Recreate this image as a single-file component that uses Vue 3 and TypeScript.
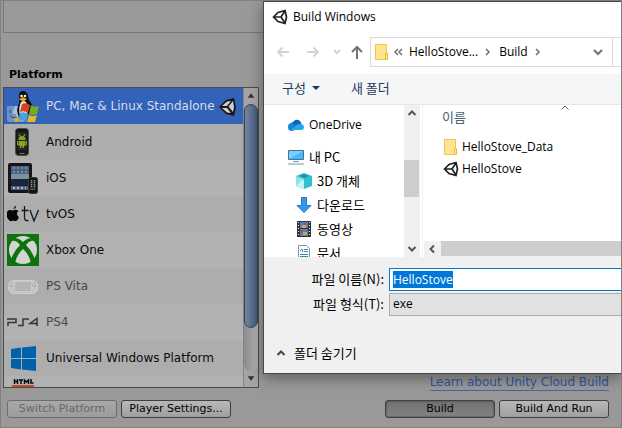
<script setup lang="ts">
import { onMounted, ref } from 'vue'

interface Platform {
  id: string
  name: string
  disabled?: boolean
}

const platforms: Platform[] = [
  { id: 'pc', name: 'PC, Mac & Linux Standalone' },
  { id: 'android', name: 'Android' },
  { id: 'ios', name: 'iOS' },
  { id: 'tvos', name: 'tvOS' },
  { id: 'xbox', name: 'Xbox One' },
  { id: 'vita', name: 'PS Vita', disabled: true },
  { id: 'ps4', name: 'PS4', disabled: true },
  { id: 'uwp', name: 'Universal Windows Platform' },
  { id: 'webgl', name: '' },
]

const places = [
  { id: 'onedrive', name: 'OneDrive' },
  { id: 'computer', name: '내 PC' },
  { id: 'objects', name: '3D 개체' },
  { id: 'downloads', name: '다운로드' },
  { id: 'videos', name: '동영상' },
  { id: 'documents', name: '문서' },
]

const selected = ref('pc')
const fileName = ref('HelloStove')
const fileType = ref('exe')
const nameInput = ref<HTMLInputElement | null>(null)

onMounted(() => {
  nameInput.value?.focus()
  nameInput.value?.select()
})
</script>

<template>
  <div class="page">
    <main class="settings">
      <div class="scenes"></div>
      <h2 class="heading">Platform</h2>
      <div class="middle">
        <div class="list-box">
          <ul class="platforms">
            <li v-for="p in platforms" :key="p.id">
              <button
                type="button"
                class="platform"
                :class="{ selected: p.id === selected, disabled: p.disabled }"
                @click="selected = p.id"
              >
                <svg class="platform-icon" viewBox="0 0 32 32" aria-hidden="true">
                  <g v-if="p.id === 'pc'">
                    <path d="M0 16h17v16H3q-3 0-3-3z" fill="#6f93c4" />
                    <path d="M8 16h9v15H9q1-4 0-7H6q0-5 2-8z" fill="#a9bfdc" />
                    <path d="M3 20v3M12 20v3M3 26q5 4 10 0" fill="none" stroke="#25406e" />
                    <path d="M12 6q0-5 4-5t5 5q0 4 3 7 3 4 1 9l-13 5q-3-6-1-11 2-4 1-10z" fill="#0b0b0b" />
                    <path d="M14 12q3-2 5 0 3 5 1 12l-7 2q-2-8 1-14z" fill="#e3e3e3" />
                    <circle cx="14.500" cy="6" r="1.300" fill="#eee" />
                    <circle cx="18" cy="6" r="1.300" fill="#eee" />
                    <path d="M12 9l4-2 4 2-4 3z" fill="#dfa81e" />
                    <path d="M6 29l5-2 3 4-5 1z" fill="#d9b13c" />
                    <path d="M15 14q4-2 8 1l-2 8q-4-3-8-1z" fill="#d5451c" />
                    <path d="M24 15q4 3 8 1l-2 8q-4 2-8 0z" fill="#6fae25" />
                    <path d="M13 23q4-2 8 1l-2 8q-4-3-8-1z" fill="#48a2dc" />
                    <path d="M22 25q4 2 8 0l-2 7h-8z" fill="#e8b72e" />
                  </g>
                  <g v-else-if="p.id === 'android'">
                    <rect x="8.500" y="2.500" width="13" height="27" rx="3" fill="#161616" stroke="#4c4c4c" />
                    <rect x="10" y="6" width="10" height="18" fill="#262626" />
                    <path d="M11.500 14q0-4 3.500-4t3.500 4z" fill="#85a51d" />
                    <path d="M11.500 15h7v5h-7zM10 15h1v4h-1zM19 15h1v4h-1zM13 20h1.500v2H13zM15.500 20H17v2h-1.500zM11.500 9l1-1 2 3h-1zM17.500 8l1 1-2 2h-1z" fill="#85a51d" />
                    <path d="M12.500 27.500h5" stroke="#777" />
                  </g>
                  <g v-else-if="p.id === 'ios'">
                    <rect x="1" y="1" width="24" height="30" rx="2" fill="#161616" />
                    <rect x="4" y="4" width="18" height="24" fill="#46627f" />
                    <path d="M4 12h18v5H4z" fill="#7d919f" />
                    <path d="M4 17h18v7H4z" fill="#17263a" />
                    <path d="M6 6h15M6 10h15" stroke="#9fb2c4" stroke-dasharray="2 2" />
                    <path d="M6 26h13" stroke="#b5b5c5" stroke-width="2" stroke-dasharray="2 2" />
                    <rect x="21.500" y="15.500" width="9" height="16" rx="2" fill="#111" stroke="#3b3b3b" />
                    <rect x="23" y="18" width="6" height="10" fill="#28342f" />
                    <path d="M24.500 18v8M27.500 18v8" stroke="#8fb092" stroke-dasharray="1 1" />
                    <path d="M23 27.500h6" stroke="#b5642b" stroke-dasharray="1 1" />
                  </g>
                  <g v-else-if="p.id === 'tvos'" fill="#060606">
                    <path d="M6.500 11.500q0-3 2.500-4 0 3-2.500 4zM6 12.500q3-1.500 5.500.5-2 1.500-1.500 3.500 .5 2 2 2.500-1 3-3 4-1 0-3-.5-2 1-3 .5-3-2-3.500-6 0-5 3.500-5z" />
                    <path d="M17.500 8v12q0 3 4 2.500M14.500 12.500h7M23 12l4 11 4.500-11" fill="none" stroke="#161616" stroke-width="1.300" />
                  </g>
                  <g v-else-if="p.id === 'xbox'">
                    <path d="M0 0h32v32H0z" fill="#0d730d" />
                    <circle cx="16" cy="16" r="14" fill="#d4d4d4" />
                    <path d="M7 4q5 0 9 4 4-4 9-4l2 3q-4-1-8 4 7 7 9 15l-4 3q-2-9-8-14-6 5-8 14l-4-3q2-8 9-15-4-5-8-4z" fill="#0d730d" />
                  </g>
                  <g v-else-if="p.id === 'vita'">
                    <rect x="1.500" y="10.500" width="29" height="13" rx="5" fill="#c5c5c5" stroke="#cecece" />
                    <rect x="7.500" y="11.500" width="17" height="10" fill="#b5b5b5" stroke="#c9c9c9" />
                    <path d="M4.500 13v5M2 15.500h5M27.500 13v5M25 15.500h5" stroke="#969696" stroke-dasharray="1 2" />
                  </g>
                  <path v-else-if="p.id === 'ps4'" d="M0 13h9v3.500H1V20M11 19.500h5V13h6M31 17.500h-8l7-5V20" fill="none" stroke="#373737" stroke-width="1.500" />
                  <g v-else-if="p.id === 'uwp'" fill="#0061ad">
                    <path d="M4 7l10-1.500V16H4zM15 5.500L29 4v12H15zM4 17h10v10.500L4 26zM15 17h14v12l-14-1.500z" />
                  </g>
                  <g v-else>
                    <path d="M7.500 1v5M10.500 1v5M7 3.500h4M12 2h4M14 2v4M17.500 6V2l2 2 2-2v4M24 1v4h2.500" fill="none" stroke="#080808" stroke-width="1.500" />
                    <path d="M5 7h22l-2 22H7z" fill="#c34a26" />
                  </g>
                </svg>
                <span>{{ p.name }}</span>
                <svg v-if="p.id === 'pc'" class="badge" viewBox="0 0 20 20" aria-hidden="true">
                  <path d="M1 10l7-7 8-2 2 9-2 9-8-2z" fill="#171717" />
                  <path d="M4 9l5-4.500 4-.5-4 5zM10.500 9.500L15 4l1 6-1 5zM4 11h5l4 5-4-.5z" fill="#cfcfcf" />
                </svg>
              </button>
            </li>
          </ul>
          <div class="unity-scroll" aria-hidden="true">
            <svg class="unity-arrow" viewBox="0 0 15 16"><path d="M4 10l3.500-5L11 10z" /></svg>
            <div class="unity-track"><div class="unity-thumb"></div></div>
            <svg class="unity-arrow" viewBox="0 0 15 16"><path d="M4 5h7l-3.500 5z" /></svg>
          </div>
        </div>
        <a class="learn" href="#cloud-build">Learn about Unity Cloud Build</a>
      </div>
      <div class="actions">
        <button type="button" class="action" disabled>Switch Platform</button>
        <button type="button" class="action">Player Settings...</button>
        <button type="button" class="action build pressed">Build</button>
        <button type="button" class="action">Build And Run</button>
      </div>
    </main>

    <section class="dialog" role="dialog" aria-label="Build Windows">
      <header class="title">
        <svg class="unity" viewBox="0 0 16 16" aria-hidden="true">
          <path d="M1.500 8L6 3.500l7-2L14.500 8 13 14.500l-7-2zM2 8h7l4-6M9 8l4 6" />
        </svg>
        <span>Build Windows</span>
      </header>
      <nav class="nav">
        <button type="button" class="nav-btn" aria-label="Back">
          <svg viewBox="0 0 16 16"><path d="M14 8H3M7.500 3.500L3 8l4.500 4.500" /></svg>
        </button>
        <button type="button" class="nav-btn" aria-label="Forward">
          <svg viewBox="0 0 16 16"><path d="M2 8h11M8.500 3.500L13 8l-4.500 4.500" /></svg>
        </button>
        <button type="button" class="nav-btn recent" aria-label="Recent">
          <svg viewBox="0 0 16 16"><path d="M5 6l3 3 3-3" /></svg>
        </button>
        <button type="button" class="nav-btn up" aria-label="Up">
          <svg viewBox="0 0 16 16"><path d="M8 15V3M3 8l5-5 5 5" /></svg>
        </button>
        <div class="address">
          <svg class="folder" viewBox="0 0 14 16" aria-hidden="true">
            <path d="M.5.5h11v15H.5z" fill="#ffe38e" stroke="#efc84a" />
            <path d="M10.500 9.500h2v6h-2z" fill="#ffe9a6" stroke="#e6b93a" />
          </svg>
          <svg class="crumb first" viewBox="0 0 10 10" aria-hidden="true"><path d="M5 2L2 5l3 3M9 2L6 5l3 3" /></svg>
          <span>HelloStove...</span>
          <svg class="crumb" viewBox="0 0 10 10" aria-hidden="true"><path d="M4 2l3 3-3 3" /></svg>
          <span>Build</span>
          <svg class="crumb" viewBox="0 0 10 10" aria-hidden="true"><path d="M4 2l3 3-3 3" /></svg>
          <button type="button" class="drop" aria-label="Previous locations">
            <svg viewBox="0 0 12 12"><path d="M2 4l4 4 4-4" /></svg>
          </button>
        </div>
        <div class="refresh"></div>
      </nav>
      <div class="toolbar">
        <button type="button">구성<svg class="caret" viewBox="0 0 8 4" aria-hidden="true"><path d="M0 0h8L4 4z" /></svg></button>
        <button type="button">새 폴더</button>
      </div>
      <div class="body">
        <aside class="places">
          <ul>
            <li v-for="p in places" :key="p.id" :class="p.id">
              <svg class="place-icon" viewBox="0 0 16 16" aria-hidden="true">
                <g v-if="p.id === 'onedrive'">
                  <path d="M2 10q-1-4 3-5 3-4 7-1 2 2 1 4z" fill="#0c65b8" />
                  <path d="M0 10q0-4 4-4l8 5-8 3q-4 0-4-4z" fill="#1683d8" />
                  <path d="M10 7q6-1 6 4-.5 2-3 2H3l7-6z" fill="#28a8ea" />
                </g>
                <g v-else-if="p.id === 'computer'">
                  <path d="M.5 1.500h15v9H.5z" fill="#48b8fa" stroke="#45708f" />
                  <path d="M1 2h14L1 10z" fill="#79d0ff" />
                  <path d="M5 12.500h6M0 15h16" stroke="#7893a5" />
                </g>
                <g v-else-if="p.id === 'objects'">
                  <path d="M0 3l8-3 8 3v10l-8 3-8-3z" fill="#31bfd2" />
                  <path d="M0 3l8 3v10l-8-3z" fill="#8ae4e8" />
                  <path d="M3 3l5-2 5 2-5 2z" fill="#1697ad" />
                  <path d="M0 13l6-6 2 1v8z" fill="#c8f3f3" />
                </g>
                <path v-else-if="p.id === 'downloads'" d="M5.500.5h5v8h4.500l-7 7-7-7h4.500z" fill="#3297ed" stroke="#2279ca" />
                <g v-else-if="p.id === 'videos'">
                  <path d="M1 0h14v16H1z" fill="#333" />
                  <path d="M4 1h8v6H4zM4 8h8v7H4z" fill="#4d7fd1" />
                  <path d="M6 4h4v3H6zM7 11h4v3H7z" fill="#d7aa2f" />
                  <path d="M8 2h2v2H8zM5 9h2v3H5z" fill="#c6402f" />
                  <path d="M2.500 1v14M13.500 1v14" stroke="#eee" stroke-dasharray="1 2" />
                </g>
                <g v-else>
                  <path d="M2.500.5h8l3 3v12h-11z" fill="#fff" stroke="#8b9499" />
                  <path d="M4 6l2-2 1 3M8 4.500h4M8 6.500h4M4 9.500h8M4 11.500h8M4 13.500h8" fill="none" stroke="#2a8ab8" />
                </g>
              </svg>
              <span>{{ p.name }}</span>
            </li>
          </ul>
          <div class="vscroll" aria-hidden="true">
            <svg viewBox="0 0 16 16"><path d="M4.500 10L8 6.500l3.500 3.500" /></svg>
            <div class="vtrack"><div class="vthumb"></div></div>
            <svg viewBox="0 0 16 16"><path d="M4.500 6L8 9.500 11.500 6" /></svg>
          </div>
        </aside>
        <div class="files">
          <div class="column-head">
            <span>이름</span>
            <svg class="sort" viewBox="0 0 8 5" aria-hidden="true"><path d="M.5 4.500L4 1l3.500 3.500" /></svg>
          </div>
          <ul>
            <li>
              <svg class="folder" viewBox="0 0 14 16" aria-hidden="true">
                <path d="M.5.5h11v15H.5z" fill="#ffe38e" stroke="#efc84a" />
                <path d="M10.500 9.500h2v6h-2z" fill="#ffe9a6" stroke="#e6b93a" />
              </svg>
              <span>HelloStove_Data</span>
            </li>
            <li>
              <svg class="unity" viewBox="0 0 16 16" aria-hidden="true">
                <path d="M1.500 8L6 3.500l7-2L14.500 8 13 14.500l-7-2zM2 8h7l4-6M9 8l4 6" />
              </svg>
              <span>HelloStove</span>
            </li>
          </ul>
          <div class="hscroll" aria-hidden="true">
            <svg viewBox="0 0 16 16"><path d="M10 4.500L6.500 8l3.500 3.500" /></svg>
            <div class="hthumb"></div>
          </div>
        </div>
      </div>
      <form class="fields" @submit.prevent>
        <label for="file-name">파일 이름(N):</label>
        <input id="file-name" ref="nameInput" v-model="fileName" type="text" autocomplete="off" spellcheck="false" />
        <label for="file-type">파일 형식(T):</label>
        <select id="file-type" v-model="fileType"><option>exe</option></select>
      </form>
      <button type="button" class="hide-folders">
        <svg viewBox="0 0 10 8" aria-hidden="true"><path d="M1.500 6L5 2.500 8.500 6" /></svg>
        <span>폴더 숨기기</span>
      </button>
    </section>
  </div>
</template>

<style>
body {
  margin: 0;
  background: #999;
}
</style>

<style scoped>
* {
  box-sizing: border-box;
}
ul {
  list-style: none;
  margin: 0;
  padding: 0;
}
button {
  font: inherit;
  color: inherit;
  border: 0;
  padding: 0;
  background: none;
}
svg {
  display: block;
  flex: none;
}
.page {
  position: relative;
  min-height: 100vh;
  overflow: hidden;
  border: 1px solid #808080;
  background: #999;
  font: 12px/16px "DejaVu Sans", sans-serif;
  color: #0c0c0c;
}
.settings {
  padding: 0 12px 8px 2px;
}
.scenes {
  height: 32px;
  border: 1px solid #777;
  border-top: 0;
}
.heading {
  margin: 34px 0 4px 6px;
  font: bold 11px/16px "DejaVu Sans", sans-serif;
  color: #000;
}
.middle {
  display: flex;
  justify-content: space-between;
  align-items: flex-end;
}
.list-box {
  display: flex;
  width: 256px;
  height: 301px;
  margin-bottom: 3px;
  border: 1px solid #4b4b4b;
}
.platforms {
  flex: 1;
  min-width: 0;
  overflow: hidden;
  background: #b2b2b2;
}
.platform {
  position: relative;
  display: flex;
  align-items: center;
  gap: 7px;
  width: 100%;
  height: 36px;
  padding-left: 3px;
  text-align: left;
  white-space: nowrap;
}
li:nth-child(even) .platform {
  background: #adadad;
}
.platform.selected {
  background: #3263b8;
  color: #d4dced;
}
.platform.disabled {
  color: #484848;
}
.platform-icon {
  width: 32px;
  height: 32px;
}
.badge {
  position: absolute;
  right: 5px;
  top: 9px;
  width: 20px;
  height: 20px;
}
.unity-scroll {
  display: flex;
  flex-direction: column;
  width: 15px;
  background: #a5a5a5;
  border-left: 1px solid #858585;
}
.unity-arrow {
  height: 16px;
  width: 14px;
  fill: #303030;
}
.unity-track {
  flex: 1;
  border-radius: 7px;
  background: linear-gradient(90deg, #8c8c8c, #b4b4b4);
}
.unity-thumb {
  height: 84%;
  border: 1px solid #34435f;
  border-radius: 7px;
  background: linear-gradient(90deg, #76859d, #465c80);
}
.learn {
  font-size: 12px;
  line-height: 16px;
  color: #2d58a5;
  text-decoration: none;
  border-bottom: 1px solid #4267a9;
}
.actions {
  display: flex;
  gap: 4px;
  margin-top: 9px;
  padding-left: 4px;
}
.action {
  width: 110px;
  height: 18px;
  border: 1px solid #404040;
  border-radius: 3px;
  background: linear-gradient(#b8b8b8, #a0a0a0);
  font-size: 11px;
  line-height: 16px;
  color: #000;
}
.action:disabled {
  color: #686868;
  border-color: #6d6d6d;
  background: linear-gradient(#a8a8a8, #9c9c9c);
}
.action.build {
  margin-left: auto;
}
.action.pressed {
  background: linear-gradient(#707070, #838383);
  box-shadow: inset 0 0 2px #333;
}

.dialog {
  position: absolute;
  left: 262px;
  right: 0;
  top: 0;
  border: 1px solid #484848;
  border-right: 0;
  background: #f0f0f0;
  box-shadow: 0 4px 14px rgba(0, 0, 0, 0.4);
  font: 12px/16px "Open Sans", "Noto Sans CJK KR", sans-serif;
  color: #000;
}
.toolbar,
.places,
.column-head,
.fields label,
.hide-folders {
  font: 13px/16px "Noto Sans CJK KR", sans-serif;
}
.title {
  display: flex;
  align-items: center;
  gap: 5px;
  height: 35px;
  padding: 0 8px 6px;
  background: #fff;
}
.unity {
  width: 16px;
  height: 16px;
  fill: none;
  stroke: #222;
  stroke-width: 1.7;
}
.nav {
  display: flex;
  align-items: center;
  height: 37px;
  padding: 0 0 7px 11px;
  background: #fff;
}
.nav-btn {
  margin-right: 14px;
}
.nav-btn svg {
  width: 16px;
  height: 16px;
  fill: none;
  stroke: #d4d4d4;
  stroke-width: 2;
}
.nav-btn.recent {
  margin: 0 4px 0 -6px;
}
.nav-btn.up {
  margin-right: 5px;
}
.nav-btn.up svg {
  stroke: #747474;
}
.address {
  display: flex;
  align-items: center;
  flex: 1;
  height: 30px;
  padding-left: 4px;
  border: 1px solid #d9d9d9;
}
.folder {
  width: 14px;
  height: 16px;
}
.crumb {
  width: 10px;
  height: 10px;
  margin: 0 7px 0 4px;
  fill: none;
  stroke: #707070;
  stroke-width: 1.5;
}
.crumb.first {
  margin-right: 6px;
}
.drop {
  margin: 0 8px 0 auto;
}
.drop svg {
  width: 12px;
  height: 12px;
  fill: none;
  stroke: #707070;
  stroke-width: 2;
}
.refresh {
  width: 8px;
  height: 30px;
  border: 1px solid #d9d9d9;
  border-width: 1px 0;
}
.toolbar {
  display: flex;
  gap: 31px;
  height: 31px;
  padding: 0 18px 3px;
  border-bottom: 1px solid #e4e6e8;
  background: #f5f6f8;
  color: #1e395b;
}
.toolbar button {
  display: flex;
  align-items: center;
}
.caret {
  width: 8px;
  height: 4px;
  margin-left: 6px;
  fill: #1e395b;
}
.body {
  display: flex;
  height: 152px;
  background: #fff;
}
.places {
  display: flex;
  width: 156px;
  overflow: hidden;
}
.places ul {
  flex: 1;
  padding-top: 8px;
}
.places li {
  display: flex;
  align-items: center;
  gap: 5px;
  height: 24px;
  padding-left: 32px;
}
.places li.onedrive {
  margin-bottom: 8px;
  padding-left: 24px;
  font: 12px/16px "Open Sans", sans-serif;
}
.places li.computer {
  padding-left: 24px;
}
.place-icon {
  width: 16px;
  height: 16px;
}
.vscroll {
  display: flex;
  flex-direction: column;
  width: 16px;
  background: #f0f0f0;
}
.vscroll svg,
.hscroll svg {
  width: 16px;
  height: 16px;
  fill: none;
  stroke: #555;
  stroke-width: 2;
}
.vtrack {
  display: flex;
  align-items: center;
  flex: 1;
  padding-bottom: 6px;
}
.vthumb {
  width: 15px;
  height: 37px;
  background: #cdcdcd;
}
.files {
  display: flex;
  flex-direction: column;
  flex: 1;
  margin-left: 2px;
  border-left: 1px solid #f3f3f3;
}
.column-head {
  display: flex;
  height: 31px;
  padding: 4px 52px 0 19px;
  justify-content: space-between;
  color: #4c607a;
}
.sort {
  width: 8px;
  height: 5px;
  margin-top: -4px;
  fill: none;
  stroke: #666;
}
.files li {
  display: flex;
  align-items: center;
  gap: 3px;
  height: 22px;
  padding-left: 20px;
}
.files li .folder {
  margin-left: 1px;
  margin-right: 1px;
}
.hscroll {
  display: flex;
  height: 16px;
  margin: auto 0 0 1px;
  background: #f0f0f0;
}
.hthumb {
  flex: 1;
  margin: 0 0 1px 1px;
  background: #cdcdcd;
}
.fields {
  display: grid;
  grid-template-columns: 120px 1fr;
  column-gap: 5px;
  row-gap: 2px;
  padding-top: 11px;
}
.fields label {
  text-align: right;
  line-height: 21px;
}
.fields input,
.fields select {
  appearance: none;
  width: 100%;
  height: 23px;
  margin: 0;
  padding: 0 3px 1px;
  border: 1px solid #adadad;
  border-right: 0;
  border-radius: 0;
  outline: 0;
  background: #e1e1e1;
  font: inherit;
  color: #000;
}
.fields input {
  border-color: #0078d7;
  background: #fff;
}
.fields input::selection {
  background: #0078d7;
  color: #fff;
}
.hide-folders {
  display: flex;
  align-items: center;
  gap: 8px;
  margin: 29px 0 12px 12px;
}
.hide-folders svg {
  width: 10px;
  height: 8px;
  fill: none;
  stroke: #444;
  stroke-width: 2;
}
</style>
